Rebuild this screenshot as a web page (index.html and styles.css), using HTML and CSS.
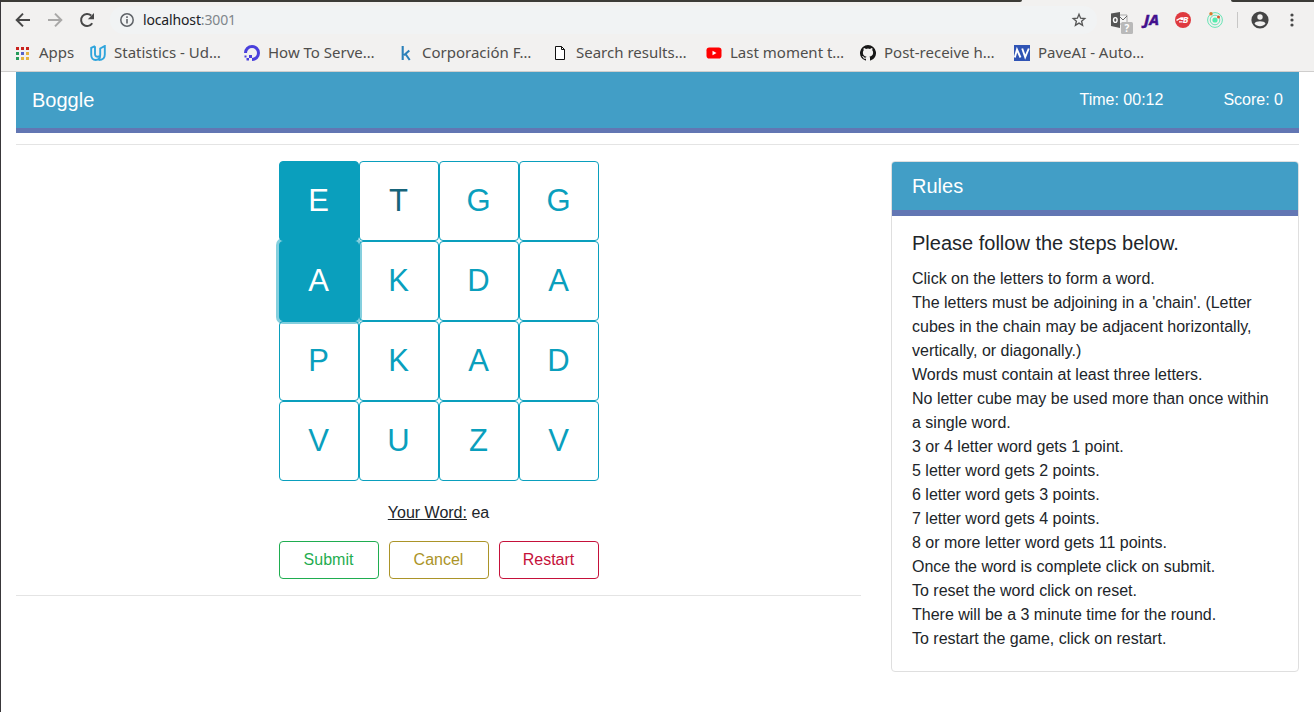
FILE: index.html
```html
<!DOCTYPE html>
<html lang="en">
<head>
<meta charset="utf-8">
<title>Boggle</title>
<link rel="stylesheet" href="styles.css">
</head>
<body>
<div class="window">
<header class="browser">
  <div class="tabstrip"><span class="strip-left"></span><span class="strip-right"></span></div>
  <div class="toolbar">
    <svg class="nav-icon" viewBox="0 0 16 16"><path d="M15 8H2M8 1.600 1.700 8 8 14.400" fill="none" stroke="#484848" stroke-width="2"/></svg>
    <svg class="nav-icon" viewBox="0 0 16 16"><path d="M1 8h13M8 1.600 14.300 8 8 14.400" fill="none" stroke="#a9a8a7" stroke-width="2"/></svg>
    <svg class="nav-icon" viewBox="0 0 16 16"><path d="M13.200 11.200A6 6 0 1 1 12.200 3.600" fill="none" stroke="#484848" stroke-width="2"/><path d="M15 1v6.200H8.800z" fill="#484848"/></svg>
    <div class="omnibox">
      <svg class="info" viewBox="0 0 14 14"><circle cx="7" cy="7" r="6.200" fill="none" stroke="#5f6368" stroke-width="1.500"/><path d="M6.200 6h1.600v4.500H6.200zM6.200 3.300h1.600v1.600H6.200z" fill="#5f6368"/></svg>
      <span class="url">localhost<span class="port">:3001</span></span>
      <svg class="star" viewBox="0 0 16 16"><path d="M8 2.300 9.600 6.200l4.200.3-3.200 2.700 1 4.100L8 11.100l-3.600 2.200 1-4.100-3.200-2.700 4.200-.3z" fill="none" stroke="#555" stroke-width="1.300"/></svg>
    </div>
    <div class="extensions">
      <svg class="ext-mail" viewBox="0 0 24 24"><path d="M9 5h8v9H9z" fill="#f4f4f4" stroke="#aaa"/><path d="m10 7 3 3 4-4" fill="none" stroke="#666"/><path d="M1 3.500 10 2v16l-9-2z" fill="#555"/><ellipse cx="5.300" cy="10" rx="1.800" ry="2.400" fill="none" stroke="#fff" stroke-width="1.400"/><rect x="11" y="12" width="12" height="12" rx="1.500" fill="#b9b9b9"/><text x="17" y="21.500" class="badge-text">?</text></svg>
      <svg class="ext-ja" viewBox="0 0 18 18"><text x="1" y="14" class="ja-text" textLength="15" lengthAdjust="spacingAndGlyphs">JA</text></svg>
      <svg class="ext-round" viewBox="0 0 16 16"><circle cx="8" cy="8" r="8" fill="#df3a40"/><path d="M1.500 8.300 6 6h2v1.300H5.500M4 9.800h3.500" fill="none" stroke="#fff" stroke-width="1.300"/><text x="7.800" y="11.200" class="b-text">B</text></svg>
      <svg class="ext-round" viewBox="0 0 16 16"><g fill="none" stroke="#68e4b5"><circle cx="8" cy="8" r="7.400"/><circle cx="8" cy="8" r="4.800"/></g><circle cx="8" cy="8" r="2.600" fill="#55edad"/><circle cx="4" cy="1.800" r="1.700" fill="#d77c2b"/><circle cx="11.500" cy="5" r="1.500" fill="#d65b2d"/></svg>
    </div>
    <span class="divider"></span>
    <svg class="profile" viewBox="0 0 18 18"><circle cx="9" cy="9" r="8.600" fill="#454545"/><circle cx="9" cy="6" r="2.700" fill="#f2f1f0"/><path d="M3.500 12.500c1-3 10-3 11 0-2.500 3.700-8.500 3.700-11 0z" fill="#f2f1f0"/></svg>
    <svg class="more" viewBox="0 0 4 14"><g fill="#484848"><circle cx="2" cy="2" r="1.600"/><circle cx="2" cy="7" r="1.600"/><circle cx="2" cy="12" r="1.600"/></g></svg>
  </div>
  <nav class="bookmarks">
    <div class="apps"><svg viewBox="0 0 13 13"><path d="M0 0h3v3H0zM5 0h3v3H5zM10 0h3v3h-3z" fill="#c9221d"/><path d="M0 5h3v3H0zM0 10h3v3H0z" fill="#249a59"/><path d="M5 5h3v3H5z" fill="#5662c9"/><path d="M5 10h3v3H5zM10 5h3v3h-3zM10 10h3v3h-3z" fill="#e4b33e"/></svg><span>Apps</span></div>
    <div class="bookmark"><svg viewBox="0 0 16 16"><path d="M5 1.200 1.200 2.800v7C1.200 13 3 15 5.600 15c2.700 0 4.600-2 4.600-5V3.500L14.800 1v8.500c0 3.500-2.500 5.500-6 5.500M5 1.200v8c0 2 1.500 3.200 4.600 2" fill="none" stroke="#2fa4dc" stroke-width="1.900"/></svg><span>Statistics - Ud…</span></div>
    <div class="bookmark"><svg viewBox="0 0 16 16"><path d="M1.500 8A6.500 6.500 0 1 1 8 14.500" fill="none" stroke="#4a40dc" stroke-width="3"/><path d="M5 10h3v3H5zM2.500 13H5v2.400H2.500zM.5 10.500h2v2h-2z" fill="#4a40dc"/></svg><span>How To Serve…</span></div>
    <div class="bookmark"><svg viewBox="0 0 16 16"><path d="M4.700 1v14M11.300 5.500 6 10.300M7.500 9l4.200 6" fill="none" stroke="#2b80b9" stroke-width="2.100"/></svg><span>Corporación F…</span></div>
    <div class="bookmark"><svg viewBox="0 0 16 16"><path d="M3.500 1.500h6l3 3v10h-9z" fill="#fff" stroke="#111"/><path d="M9.500 1.500v3h3" fill="none" stroke="#111"/></svg><span>Search results…</span></div>
    <div class="bookmark"><svg viewBox="0 0 16 16"><rect x=".5" y="2.500" width="15" height="11" rx="2.800" fill="#f00"/><path d="m6.500 5.800 4 2.200-4 2.200z" fill="#fff"/></svg><span>Last moment t…</span></div>
    <div class="bookmark"><svg viewBox="0 0 16 16"><path fill="#171717" d="M8 0a8 8 0 0 0-2.500 15.600c.4.100.5-.2.500-.4v-1.500c-2 .4-2.600-.5-2.800-1-.1-.2-.5-.9-.8-1.100-.3-.2-.7-.6 0-.6.6 0 1.100.6 1.200.8.700 1.200 1.900.9 2.400.7.100-.5.300-.9.500-1.100-1.800-.2-3.600-.9-3.600-4 0-.9.300-1.600.8-2.200-.1-.2-.4-1 .1-2.100 0 0 .7-.2 2.200.8a7.500 7.500 0 0 1 4 0c1.500-1 2.200-.8 2.200-.8.400 1.100.1 1.900.1 2.100.5.600.8 1.300.8 2.200 0 3.100-1.900 3.800-3.700 4 .3.200.6.700.6 1.500v2.300c0 .2.100.5.500.4A8 8 0 0 0 8 0z"/></svg><span>Post-receive h…</span></div>
    <div class="bookmark"><svg viewBox="0 0 16 16"><path d="M0 0h16v16H0z" fill="#3054b5"/><path d="m.8 12.500 2.200-8 3.500 8M8.200 3.500l3 8.500 3.600-8.500" fill="none" stroke="#fff" stroke-width="1.900"/></svg><span>PaveAI - Auto…</span></div>
  </nav>
</header>
<main class="page">
  <div class="navbar"><span class="brand">Boggle</span><span class="time">Time: 00:12</span><span>Score: 0</span></div>
  <hr class="rule">
  <div class="columns">
    <section class="game">
      <div class="board">
        <button class="cube used">E</button><button class="cube hovered">T</button><button class="cube">G</button><button class="cube">G</button>
        <button class="cube used focused">A</button><button class="cube">K</button><button class="cube">D</button><button class="cube">A</button>
        <button class="cube">P</button><button class="cube">K</button><button class="cube">A</button><button class="cube">D</button>
        <button class="cube">V</button><button class="cube">U</button><button class="cube">Z</button><button class="cube">V</button>
      </div>
      <p class="word"><u>Your Word:</u> ea</p>
      <div class="actions"><button class="action submit">Submit</button><button class="action cancel">Cancel</button><button class="action restart">Restart</button></div>
      <hr class="rule">
    </section>
    <aside class="card">
      <h2 class="card-header">Rules</h2>
      <div class="card-body">
        <h3 class="card-title">Please follow the steps below.</h3>
        <p>Click on the letters to form a word.</p>
        <p>The letters must be adjoining in a 'chain'. (Letter cubes in the chain may be adjacent horizontally, vertically, or diagonally.)</p>
        <p>Words must contain at least three letters.</p>
        <p>No letter cube may be used more than once within a single word.</p>
        <p>3 or 4 letter word gets 1 point.</p>
        <p>5 letter word gets 2 points.</p>
        <p>6 letter word gets 3 points.</p>
        <p>7 letter word gets 4 points.</p>
        <p>8 or more letter word gets 11 points.</p>
        <p>Once the word is complete click on submit.</p>
        <p>To reset the word click on reset.</p>
        <p>There will be a 3 minute time for the round.</p>
        <p>To restart the game, click on restart.</p>
      </div>
    </aside>
  </div>
</main>
</div>
</body>
</html>
```
FILE: styles.css
```css
* { box-sizing: border-box; }
body { margin: 0; background: #fff; color: #212529; font: 16px/24px "Liberation Sans", Arial, sans-serif; }
p, h2, h3 { margin: 0; font-weight: 400; }
button { font-family: inherit; padding: 0; }
.window { height: 712px; border-left: 1px solid #39373a; overflow: hidden; }

/* Browser chrome */
.browser { height: 72px; background: #f2f1f0; border-bottom: 1px solid #cfcecd; font-family: "Noto Sans", "Open Sans", sans-serif; }
.tabstrip { height: 2px; display: flex; justify-content: space-between; }
.strip-left { width: 1021px; background: #3c3b37; border-bottom-right-radius: 4px; }
.strip-right { width: 83px; background: #3c3b37; border-bottom-left-radius: 4px; }
.toolbar { height: 36px; display: flex; align-items: center; padding-left: 14px; }
.nav-icon { width: 16px; height: 16px; margin-right: 16px; }
.omnibox { width: 987px; height: 28px; margin-left: -1px; padding: 0 10px; border-radius: 14px; background: #f1f3f4; display: flex; align-items: center; font-size: 14px; }
.info { width: 14px; height: 14px; margin-right: 9px; }
.url { color: #202124; letter-spacing: -.15px; }
.port { color: #80868b; }
.star { width: 16px; height: 16px; margin-left: auto; }
.extensions { display: flex; align-items: center; gap: 16px; margin-left: 13px; }
.ext-mail { width: 24px; height: 24px; margin: 4px -7px 0 0; }
.ext-ja { width: 18px; height: 18px; margin-right: -2px; overflow: visible; }
.ext-round { width: 16px; height: 16px; }
.badge-text { fill: #fff; font: bold 10px "Noto Sans", sans-serif; text-anchor: middle; }
.ja-text { fill: #43108d; stroke: #43108d; stroke-width: .4px; font: italic 800 14px "Noto Sans", sans-serif; }
.b-text { fill: #fff; font: italic bold 9px "Noto Sans", sans-serif; }
.divider { width: 1px; height: 16px; background: #c8c7c6; margin: 0 13px 0 14px; }
.profile { width: 18px; height: 18px; }
.more { width: 4px; height: 14px; margin-left: 21px; }
.bookmarks { height: 33px; display: flex; align-items: center; padding: 0 0 3px 15px; font-size: 15px; color: #4f4e4c; white-space: nowrap; }
.bookmarks span { padding-bottom: 2px; }
.apps { width: 74px; display: flex; align-items: center; }
.apps svg { width: 13px; height: 13px; margin-right: 10px; }
.bookmark { width: 154px; display: flex; align-items: center; }
.bookmark svg { width: 16px; height: 16px; margin-right: 8px; flex: none; }

/* Game page */
.page { padding: 0 15px; }
.navbar { height: 61px; padding: 0 16px; display: flex; align-items: center; background: #429ec6; border-bottom: 5px solid #6276b3; color: #fff; }
.brand { font-size: 20px; margin-right: auto; }
.time { margin-right: 60px; }
.rule { height: 1px; margin: 11px 0 16px; border: 0; background: #e4e4e4; }
.columns { display: grid; grid-template-columns: 845px 408px; column-gap: 30px; align-items: start; }
.game { display: flex; flex-direction: column; align-items: center; }
.board { display: grid; grid-template-columns: repeat(4, 80px); grid-auto-rows: 80px; }
.cube { font-size: 31px; color: #0a9fbd; background: #fff; border: 1px solid #0a9fbd; border-radius: 4px; }
.used { color: #fff; background: #0a9fbd; }
.hovered { color: #17647a; }
.focused { z-index: 1; box-shadow: 0 0 0 3px rgba(10, 159, 189, .5); }
.word { margin-top: 20px; }
.actions { display: flex; gap: 10px; margin-top: 16px; }
.action { width: 100px; height: 38px; background: #fff; font-size: 16px; border: 1px solid; border-radius: 4px; }
.submit { color: #1fad50; }
.cancel { color: #ab9428; }
.restart { color: #c5113a; }
.game .rule { width: 100%; margin: 16px 0; }
.card { height: 511px; border: 1px solid #dfdfdf; border-radius: 4px; overflow: hidden; }
.card-header { height: 54px; padding: 12px 20px; background: #429ec6; border-bottom: 6px solid #6276b3; color: #fff; font-size: 20px; line-height: 24px; }
.card-body { padding: 15px 20px; }
.card-title { margin-bottom: 12px; font-size: 20px; line-height: 24px; }
```
